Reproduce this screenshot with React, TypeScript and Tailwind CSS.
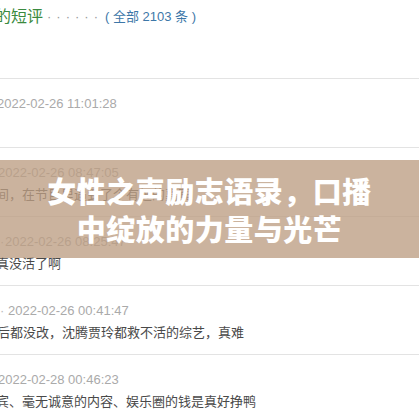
import React from 'react'

const font = '"Liberation Sans", "Noto Sans CJK SC", sans-serif'

interface Comment {
  date: string
  text: string
  dateOffset: string
  textOffset: string
  prefix?: string
}

const comments: Comment[] = [
  { date: '2022-02-26 11:01:28', text: '', dateOffset: '-ml-[3px]', textOffset: '-ml-[3px]' },
  { date: '2022-02-26 08:47:05', text: '间，在节目里遇到了个有趣的嘉宾', dateOffset: '-ml-[2px]', textOffset: '-ml-[4px]' },
  { date: '2022-02-26 08:25:47', text: '真没活了啊', dateOffset: 'ml-[5px]', textOffset: '-ml-[4px]', prefix: '·' },
  { date: '2022-02-26 00:41:47', text: '后都没改，沈腾贾玲都救不活的综艺，真难', dateOffset: 'ml-[8px]', textOffset: '-ml-[3px]', prefix: '·' },
  { date: '2022-02-28 00:46:23', text: '宾、毫无诚意的内容、娱乐圈的钱是真好挣鸭', dateOffset: '-ml-[2px]', textOffset: '-ml-[4px]' },
]

function CommentItem({ c }: { c: Comment }) {
  return (
    <div className="border-t border-[#e3e3e3] pt-[15px] pb-[10px] overflow-hidden">
      <div className="relative h-[20px] flex items-center">
        {c.prefix && (
          <span className="absolute left-[0px] text-[13px] text-[#bbb]">{c.prefix}</span>
        )}
        <span className={`${c.dateOffset} text-[13px] leading-[20px] text-[#aaa] whitespace-nowrap`}>{c.date}</span>
      </div>
      <div className={`${c.textOffset} mt-[1px] h-[22px] text-[13px] leading-[22px] text-[#494949] whitespace-nowrap`}>
        {c.text}
      </div>
    </div>
  )
}

export default function App() {
  return (
    <div className="relative w-[419px] h-[419px] overflow-hidden bg-white" style={{ fontFamily: font }}>
      <div className="h-[78px] pt-[5px] flex items-start">
        <div className="flex items-center h-[24px] whitespace-nowrap">
          <span className="-ml-[5px] text-[16px] text-[#3b8a40]">的短评</span>
          <span className="ml-[4px] text-[13px] text-[#999] tracking-[5px]">······</span>
          <span className="ml-[2px] text-[13px] text-[#3d77a8]">( 全部 2103 条 )</span>
        </div>
      </div>
      {comments.map((c) => (
        <CommentItem key={c.date} c={c} />
      ))}

      <div className="absolute left-0 right-0 top-[160px] h-[98px] bg-[rgba(188,157,131,0.78)] flex flex-col items-center justify-center">
        <div
          className="text-white font-black text-[29px] leading-[38px] tracking-[0.5px] whitespace-nowrap"
          style={{ fontFamily: '"Noto Sans CJK SC", sans-serif' }}
        >
          女性之声励志语录，口播
        </div>
        <div
          className="text-white font-black text-[29px] leading-[38px] tracking-[0.5px] whitespace-nowrap"
          style={{ fontFamily: '"Noto Sans CJK SC", sans-serif' }}
        >
          中绽放的力量与光芒
        </div>
      </div>
    </div>
  )
}
